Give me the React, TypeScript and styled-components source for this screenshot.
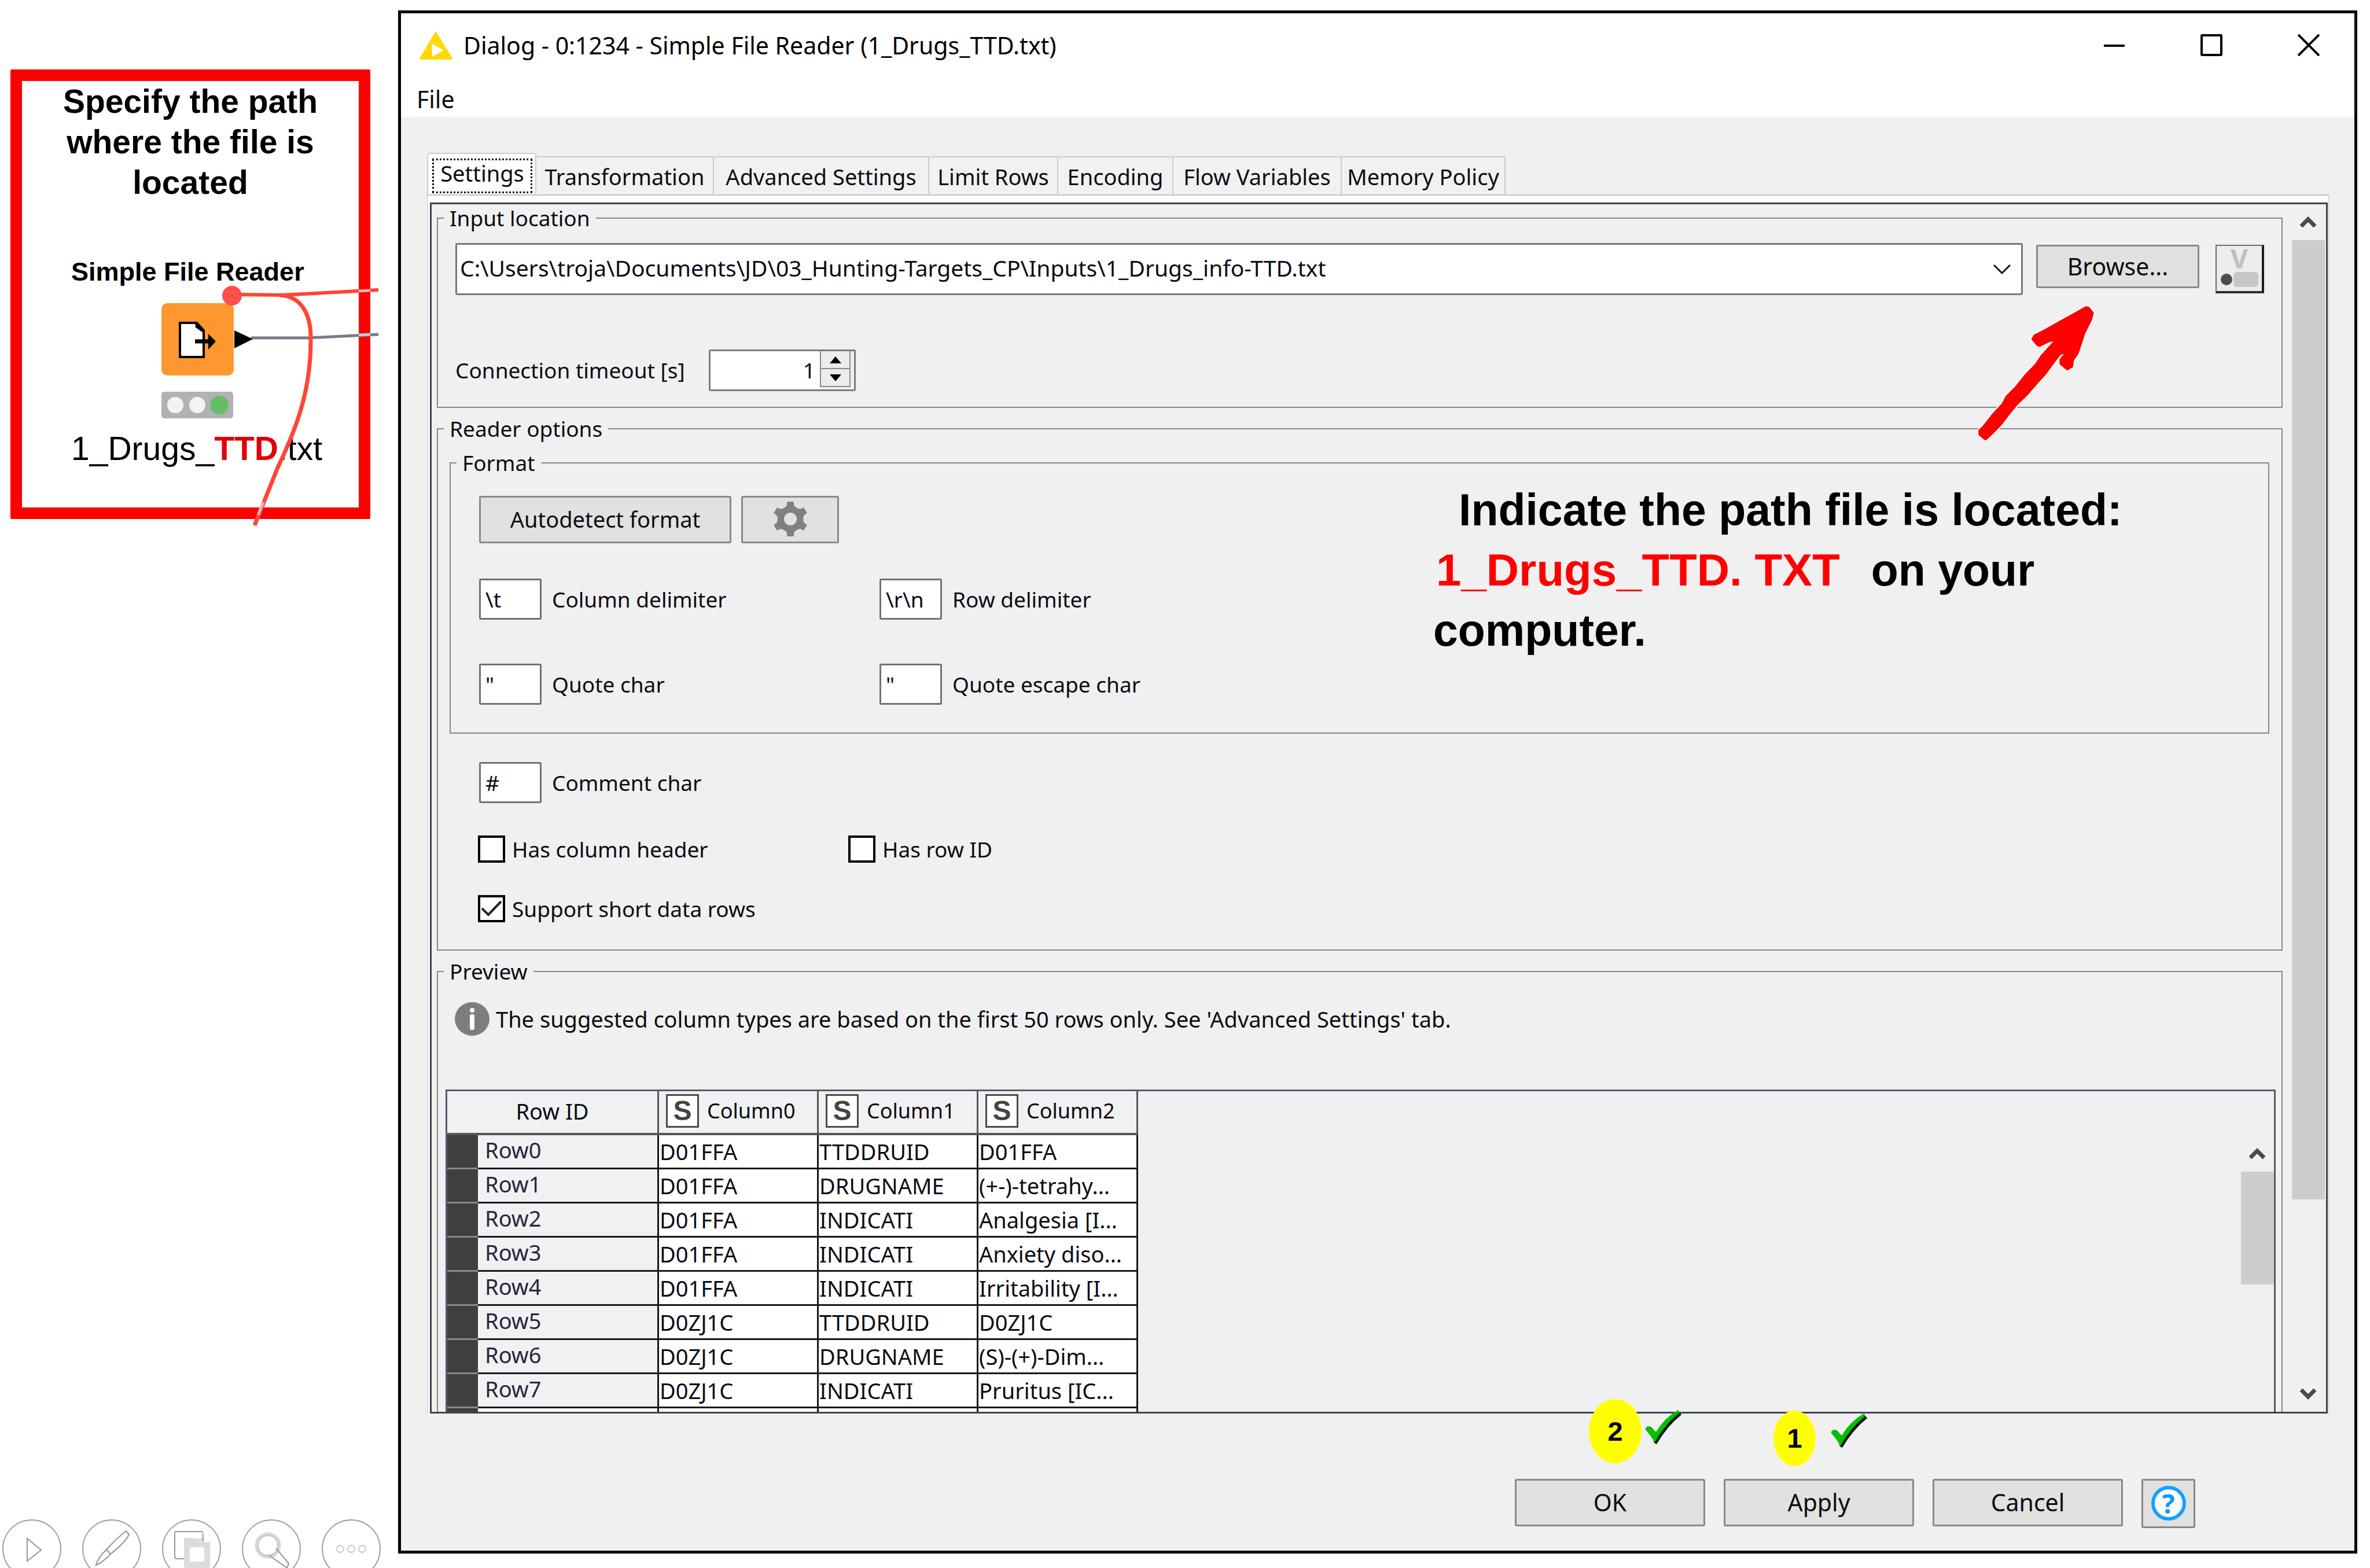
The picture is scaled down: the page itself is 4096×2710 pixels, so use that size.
import React from "react";
import styled, { createGlobalStyle, css } from "styled-components";

const UI = `"Noto Sans", "Open Sans", "DejaVu Sans", sans-serif`;
const ARIAL = `"Liberation Sans", Arial, sans-serif`;

const GlobalStyle = createGlobalStyle`
  *, *::before, *::after { box-sizing: border-box; }
  html, body { margin: 0; background: #fff; }
  body { font-family: ${UI}; font-size: 37px; line-height: 44px; color: #0b0b14; overflow: hidden; }
  button, input, select { font: inherit; color: inherit; margin: 0; }
`;

/* ---------- page ---------- */

const Page = styled.div`
  display: flex;
  height: 100vh;
  overflow: hidden;
`;

const Side = styled.aside`
  flex: 0 0 688px;
  min-width: 0;
  display: flex;
  flex-direction: column;
  justify-content: space-between;
  padding-top: 120px;
`;

const NoteBox = styled.section`
  position: relative;
  height: 777px;
  margin: 0 48px 0 18px;
  border: 20px solid #fe0000;
  border-radius: 2px;
  font-family: ${ARIAL};
  color: #000;
`;

const NoteTitle = styled.h2`
  margin: 0 60px;
  text-align: center;
  font-size: 57px;
  line-height: 70px;
`;

const NodeName = styled.p`
  margin: 90px 0 0 85px;
  font-size: 45px;
  font-weight: 700;
  line-height: 60px;
  white-space: nowrap;
`;

const NodeFile = styled.p`
  margin: 240px 0 0 85px;
  font-size: 57px;
  line-height: 70px;
  white-space: nowrap;
  b { color: #e00008; }
`;

const NodeDrawing = styled.svg`
  position: absolute;
  left: 232px;
  top: 350px;
  width: 390px;
  height: 425px;
`;

const SlideTools = styled.div`
  display: flex;
  gap: 36px;
  height: 84px;
  padding-left: 4px;
`;

const SlideTool = styled.button`
  flex: 0 0 102px;
  height: 102px;
  padding: 0;
  border: 2px solid #a59c9c;
  border-radius: 50%;
  background: #fff;
  svg { display: block; width: 98px; height: 98px; }
`;

/* ---------- dialog frame ---------- */

const Dialog = styled.main`
  flex: 1;
  min-width: 0;
  margin: 18px 22px 25px 0;
  border: 5px solid #000;
  display: flex;
  flex-direction: column;
  background: #fff;
`;

const TitleBar = styled.header`
  display: flex;
  align-items: center;
  height: 110px;
  padding: 0 60px 0 32px;
`;

const TitleText = styled.h1`
  flex: 1;
  margin: 0 0 0 19px;
  font-size: 41px;
  font-weight: 400;
  color: #000;
`;

const WindowButtons = styled.div`
  display: flex;
  gap: 130px;
`;

const WindowButton = styled.button`
  width: 38px;
  height: 38px;
  padding: 0;
  border: 0;
  background: none;
  svg { display: block; }
`;

const MenuBar = styled.nav`
  display: flex;
  align-items: center;
  height: 69px;
  padding: 6px 27px 0;
`;

const MenuItem = styled.button`
  padding: 0;
  border: 0;
  background: none;
  font-size: 41px;
`;

const Body = styled.div`
  flex: 1;
  min-height: 0;
  display: flex;
  flex-direction: column;
  padding: 62px 44px 0 45px;
  background: #f0f0f0;
`;

/* ---------- tabs ---------- */

const Tabs = styled.div`
  display: flex;
  align-items: flex-end;
  height: 72px;
`;

const Tab = styled.button<{ $w: number; $active?: boolean }>`
  flex: 0 0 ${(p) => p.$w}px;
  height: 66px;
  padding: 2px 0 0;
  border: solid #cfc9ca;
  border-width: 2px 2px 0 0;
  background: #f1f1f1;
  font-size: 38px;
  white-space: nowrap;
  ${(p) =>
    p.$active &&
    css`
      height: 72px;
      padding: 6px 5px 0 7px;
      border-width: 2px 2px 0;
      border-radius: 6px 6px 0 0;
      background: #fff;
    `}
`;

const FocusRing = styled.span`
  display: block;
  height: 60px;
  border: 3px dotted #000;
  line-height: 44px;
`;

const TabPanel = styled.section`
  flex: 1;
  min-height: 0;
  display: flex;
  padding: 12px 1px 0 4px;
  border: 1px solid #c4bfc1;
  border-top-width: 2px;
  border-bottom: 0;
  background: #fff;
`;

const ScrollPane = styled.div`
  position: relative;
  flex: 1;
  min-width: 0;
  display: flex;
  overflow: hidden;
  border: 3px solid #3a4356;
  background: #f0f0f0;
`;

const PaneContent = styled.form`
  flex: 1;
  min-width: 0;
  display: flex;
  flex-direction: column;
  gap: 14px;
  padding: 2px 13px 0 9px;
`;

const ScrollBar = styled.div<{ $w: number; $lead: number }>`
  flex: 0 0 ${(p) => p.$w}px;
  display: flex;
  flex-direction: column;
  align-items: center;
  padding-top: ${(p) => p.$lead}px;
`;

const ScrollArrow = styled.button`
  width: 57px;
  height: 62px;
  padding: 0;
  border: 0;
  background: none;
  svg { display: block; margin: 0 auto; }
`;

const ScrollThumb = styled.div<{ $h: number }>`
  width: 57px;
  height: ${(p) => p.$h}px;
  margin-bottom: auto;
  border-radius: 3px;
  background: #cdcdcd;
`;

/* ---------- groups and fields ---------- */

const GroupFrame = styled.fieldset<{ $h: number }>`
  flex: none;
  height: ${(p) => p.$h}px;
  min-width: 0;
  margin: 0;
  padding: 0;
  border: 2px solid #8b8588;
`;

const Legend = styled.legend`
  margin-left: 10px;
  padding: 0 10px;
  line-height: 44px;
`;

const GroupBody = styled.div<{ $pad: string }>`
  padding: ${(p) => p.$pad};
`;

const Row = styled.div<{ $top?: number; $gap?: number }>`
  display: flex;
  align-items: center;
  gap: ${(p) => p.$gap ?? 0}px;
  margin-top: ${(p) => p.$top ?? 0}px;
`;

const PathRow = styled.div`
  display: flex;
  align-items: flex-start;
  gap: 23px;
`;

const Combo = styled.div`
  position: relative;
  flex: 1;
  svg { position: absolute; right: 20px; top: 36px; pointer-events: none; }
`;

const ComboSelect = styled.select`
  display: block;
  width: 100%;
  height: 90px;
  padding: 0 80px 4px 5px;
  border: 3px solid #737887;
  border-radius: 3px;
  background: #fff;
  font-size: 39px;
  line-height: 60px;
  appearance: none;
`;

const PathActions = styled.div`
  display: flex;
  align-items: flex-start;
  gap: 28px;
  padding-top: 3px;
`;

const PushButton = styled.button<{ $w: number; $h: number; $size?: number }>`
  display: flex;
  align-items: center;
  justify-content: center;
  width: ${(p) => p.$w}px;
  height: ${(p) => p.$h}px;
  padding: 0 0 2px;
  border: 3px solid #8d8789;
  border-radius: 3px;
  background: #e1e1e0;
  font-size: ${(p) => p.$size ?? 38}px;
  white-space: nowrap;
`;

const VariableButton = styled.button`
  display: flex;
  flex-direction: column;
  align-items: center;
  width: 84px;
  height: 84px;
  padding: 0;
  border: solid #6b6b6b;
  border-width: 2px 4px 4px 2px;
  border-right-color: #1c1c1c;
  border-bottom-color: #2c2c2c;
  background: #ececeb;
  font-size: 46px;
  font-weight: 700;
  line-height: 42px;
  color: #bfbfbf;
`;

const Switch = styled.span`
  display: flex;
  align-items: center;
  gap: 2px;
  height: 28px;
  margin-top: 2px;
  &::before { content: ""; width: 20px; height: 20px; border-radius: 50%; background: #4b4f55; }
  &::after { content: ""; width: 43px; height: 26px; border-radius: 6px; background: #c6c6c6; }
`;

const TimeoutLabel = styled.label`
  flex: 0 0 438px;
`;

const Spinner = styled.div`
  display: flex;
  width: 254px;
  height: 72px;
  padding-right: 6px;
  border: 3px solid #7b7c84;
  border-radius: 3px;
  background: #f0f0f0;
`;

const SpinnerInput = styled.input`
  flex: 1;
  min-width: 0;
  padding: 0 8px 0 0;
  border: 0;
  background: #fff;
  text-align: right;
  appearance: textfield;
  &::-webkit-inner-spin-button { appearance: none; }
`;

const SpinnerButtons = styled.div`
  display: flex;
  flex-direction: column;
  width: 53px;
  height: 62px;
`;

const SpinnerButton = styled.button`
  flex: 1;
  display: flex;
  align-items: center;
  justify-content: center;
  padding: 0;
  border: 2px solid #8a8a8e;
  border-top-width: 0;
  background: #ededed;
`;

const FieldGrid = styled.div`
  display: grid;
  grid-template-columns: 692px 1fr;
  row-gap: 76px;
  margin-top: 61px;
`;

const Field = styled.div<{ $top?: number; $left?: number }>`
  display: flex;
  align-items: center;
  gap: 18px;
  margin: ${(p) => p.$top ?? 0}px 0 0 ${(p) => p.$left ?? 0}px;
`;

const CharInput = styled.input`
  width: 108px;
  height: 71px;
  padding: 0 8px;
  border: 3px solid #6f7080;
  border-radius: 3px;
  background: #fff;
  line-height: 60px;
`;

const CheckRow = styled.div<{ $top: number }>`
  display: grid;
  grid-template-columns: 640px 1fr;
  margin: ${(p) => p.$top}px 0 0 49px;
`;

const CheckLabel = styled.label`
  position: relative;
  display: flex;
  align-items: center;
  gap: 12px;
  svg { position: absolute; left: 5px; top: 6px; pointer-events: none; }
`;

const CheckBox = styled.input`
  appearance: none;
  width: 47px;
  height: 47px;
  border: 4px solid #000;
  background: #fff;
`;

/* ---------- preview ---------- */

const Info = styled.p`
  display: flex;
  align-items: center;
  gap: 11px;
  margin: 0 0 93px 16px;
  font-size: 38px;
`;

const TableBox = styled.div`
  display: flex;
  justify-content: space-between;
  height: 600px;
  border: 3px solid #555c70;
`;

const DataTable = styled.table`
  width: 1194px;
  table-layout: fixed;
  border-spacing: 0;
  align-self: flex-start;
  font-size: 38px;
`;

const HeadCell = styled.th`
  height: 76px;
  padding: 0 0 4px;
  border-right: 3px solid #55555c;
  border-bottom: 4px solid #55555c;
  background: #f1f1f2;
  font-weight: 400;
`;

const HeadInner = styled.span`
  display: flex;
  align-items: center;
  gap: 14px;
  padding-left: 12px;
  font-size: 36px;
`;

const TypeIcon = styled.span`
  width: 57px;
  height: 58px;
  border: 3px solid #4a4a4e;
  background: #fff;
  font-family: ${ARIAL};
  font-size: 48px;
  font-weight: 700;
  line-height: 52px;
  text-align: center;
  color: #444;
`;

const Strip = styled.td`
  height: 59px;
  padding: 0;
  border-bottom: 3px solid #8a8a8a;
  background: #3f3f3f;
`;

const RowHead = styled.th<{ $blank: boolean }>`
  height: 59px;
  padding: 0 0 6px 12px;
  border-right: 3px solid #16161c;
  border-bottom: 3px solid #16161c;
  background: ${(p) => (p.$blank ? "#fff" : "#f1f1f4")};
  font-weight: 400;
  line-height: 44px;
  text-align: left;
  color: #26263a;
`;

const Cell = styled.td`
  height: 59px;
  padding: 0 0 0 1px;
  border-right: 3px solid #16161c;
  border-bottom: 3px solid #16161c;
  background: #fff;
  line-height: 50px;
  white-space: nowrap;
  overflow: hidden;
`;

/* ---------- annotations over the pane ---------- */

const Callout = styled.div`
  position: absolute;
  left: 1731px;
  top: 476px;
  font-family: ${ARIAL};
  font-size: 77px;
  font-weight: 700;
  line-height: 104px;
  white-space: nowrap;
  color: #000;
`;

const CalloutLine = styled.p<{ $indent?: number }>`
  display: flex;
  gap: 54px;
  margin: 0;
  padding-left: ${(p) => p.$indent ?? 0}px;
  em { font-size: 78px; font-style: normal; color: #fe0000; }
`;

const PointerArrow = styled.svg`
  position: absolute;
  right: 395px;
  top: 171px;
  width: 210px;
  height: 244px;
`;

/* ---------- footer ---------- */

const Footer = styled.footer`
  display: flex;
  justify-content: flex-end;
  align-items: flex-start;
  gap: 32px;
  height: 237px;
  padding: 113px 231px 0 0;
`;

const Slot = styled.div`
  position: relative;
`;

const Step = styled.span<{ $x: number; $y: number; $w: number; $h: number }>`
  position: absolute;
  left: ${(p) => p.$x}px;
  top: ${(p) => p.$y}px;
  width: ${(p) => p.$w}px;
  height: ${(p) => p.$h}px;
  border-radius: 50%;
  background: #ffff00;
  font-family: ${ARIAL};
  font-size: 47px;
  font-weight: 700;
  line-height: ${(p) => p.$h}px;
  text-align: center;
  color: #000;
`;

const StepTick = styled.svg<{ $x: number; $y: number }>`
  position: absolute;
  left: ${(p) => p.$x}px;
  top: ${(p) => p.$y}px;
  width: 64px;
  height: 60px;
`;

const HelpMark = styled.span`
  width: 60px;
  height: 60px;
  border: 6px solid #189fff;
  border-radius: 50%;
  background: #fff;
  font-size: 46px;
  font-weight: 700;
  line-height: 48px;
  text-align: center;
  color: #0a9bff;
`;

/* ---------- drawings ---------- */

const Chevron = ({ up }: { up?: boolean }) => (
  <svg width="30" height="24" viewBox="0 0 30 24" aria-hidden="true">
    <path d={up ? "M3 19 L15 7 L27 19" : "M3 5 L15 17 L27 5"} fill="none" stroke="#4a4b50" strokeWidth="7" />
  </svg>
);

const gearPoints = () => {
  const pts: string[] = [];
  const at = (deg: number, r: number) => {
    const a = (deg * Math.PI) / 180;
    pts.push(`${(32 + r * Math.sin(a)).toFixed(1)},${(32 - r * Math.cos(a)).toFixed(1)}`);
  };
  for (let i = 0; i < 6; i++) {
    const c = i * 60;
    at(c - 22, 22);
    at(c - 14, 24);
    at(c - 10, 30);
    at(c + 10, 30);
    at(c + 14, 24);
    at(c + 22, 22);
  }
  return pts.join(" ");
};

const Gear = () => (
  <svg width="64" height="64" viewBox="0 0 64 64" aria-hidden="true">
    <polygon points={gearPoints()} fill="#7f8082" stroke="#7f8082" strokeWidth="1" strokeLinejoin="round" />
    <circle cx="32" cy="32" r="11" fill="#e1e1e0" />
  </svg>
);

const Tick = ({ x, y }: { x: number; y: number }) => (
  <StepTick $x={x} $y={y} viewBox="0 0 64 60" aria-hidden="true">
    <path d="M4 31 Q8 26 12 31 L20 40 Q35 15 58 2 L63 8 Q38 28 20 59 L16 57 Q12 40 4 36 Z" fill="#001505" />
    <path d="M1 31 Q6 25 11 31 L19 38 Q33 14 57 0 L60 4 Q33 26 17 56 Q10 44 1 34 Z" fill="#00c000" />
  </StepTick>
);

const Node = () => (
  <NodeDrawing viewBox="270 490 390 425" aria-hidden="true">
    <path d="M434 584 L533 584 L654 578" fill="none" stroke="#7c7a84" strokeWidth="5" />
    <path d="M620 579 L640 578" stroke="#a9d4ee" strokeWidth="5" />
    <path d="M410 509 L488 510 L654 501" fill="none" stroke="#ff4433" strokeWidth="6" />
    <path d="M620 503 L640 502" stroke="#ffc4bd" strokeWidth="4" />
    <path d="M484 510 C522 512 537 545 537 583 C538 670 515 735 480 808 L440 908" fill="none" stroke="#ff4536" strokeWidth="7" />
    <path d="M455 868 L446 890" stroke="#ffb3ad" strokeWidth="5" />
    <rect x="279" y="524" width="125" height="125" rx="10" fill="#fe972f" />
    <ellipse cx="401" cy="511" rx="17" ry="17" fill="#fd4f4c" />
    <path d="M405 571 V602 L437 586 Z" fill="#000" />
    <path d="M311 558 H340 L352 571 V617 H311 Z" fill="#fff" stroke="#000" strokeWidth="4" />
    <path d="M337 556 L354 571 V577 L338 566 Z" fill="#000" />
    <path d="M337 590 H362" stroke="#000" strokeWidth="7" />
    <path d="M360 577 L373 590 L360 604 Z" fill="#000" />
    <rect x="279" y="677" width="124" height="46" rx="5" fill="#b2b1b5" />
    <circle cx="303" cy="700" r="14" fill="#f3f3f3" />
    <circle cx="341" cy="700" r="14" fill="#f3f3f3" />
    <circle cx="379" cy="700" r="16" fill="#65bd61" />
  </NodeDrawing>
);

const slideTools = [
  { name: "Play", art: <path d="M41 31 V70 L65 51 Z" /> },
  {
    name: "Pen",
    art: <path d="M74 18 L79 24 Q74 36 47 58 Q34 72 22 77 Q24 66 40 50 Q58 30 74 18 Z M40 50 L47 58" />,
  },
  {
    name: "Slides",
    art: (
      <>
        <path d="M36 30 H69 V37 H81 V82 H36 Z" fill="#dcdcde" stroke="none" />
        <path d="M67 19 H22 Q20 19 20 22 V62 Q20 66 24 66 H36" />
        <path d="M67 19 Q69 19 69 36" />
        <rect x="46" y="46" width="25" height="25" rx="3" fill="#fff" stroke="none" />
        <path d="M49 24 H66 V30 Q58 34 49 28 Z" fill="#fff" stroke="none" />
      </>
    ),
  },
  {
    name: "Zoom",
    art: (
      <>
        <circle cx="43" cy="43" r="20" stroke="#dad6d6" strokeWidth="5" />
        <circle cx="43" cy="43" r="17" strokeWidth="1" />
        <path d="M45 60 L76 82 M57 48 L79 74 L76 82" />
      </>
    ),
  },
  {
    name: "More",
    art: (
      <g stroke="#cfc9c9">
        <circle cx="30" cy="49" r="6" />
        <circle cx="49" cy="49" r="6" />
        <circle cx="68" cy="49" r="6" />
      </g>
    ),
  },
];

/* ---------- data ---------- */

const tabs: [string, number][] = [
  ["Settings", 189],
  ["Transformation", 307],
  ["Advanced Settings", 372],
  ["Limit Rows", 223],
  ["Encoding", 199],
  ["Flow Variables", 291],
  ["Memory Policy", 283],
];

const rows = [
  ["Row0", "D01FFA", "TTDDRUID", "D01FFA"],
  ["Row1", "D01FFA", "DRUGNAME", "(+-)-tetrahy..."],
  ["Row2", "D01FFA", "INDICATI", "Analgesia [I..."],
  ["Row3", "D01FFA", "INDICATI", "Anxiety diso..."],
  ["Row4", "D01FFA", "INDICATI", "Irritability [I..."],
  ["Row5", "D0ZJ1C", "TTDDRUID", "D0ZJ1C"],
  ["Row6", "D0ZJ1C", "DRUGNAME", "(S)-(+)-Dim..."],
  ["Row7", "D0ZJ1C", "INDICATI", "Pruritus [IC..."],
  ["", "", "", ""],
];

type GroupProps = { title: string; height: number; pad: string; children: React.ReactNode };

const Group = ({ title, height, pad, children }: GroupProps) => (
  <GroupFrame $h={height}>
    <Legend>{title}</Legend>
    <GroupBody $pad={pad}>{children}</GroupBody>
  </GroupFrame>
);

const CharField = ({ id, label, value }: { id: string; label: string; value: string }) => (
  <Field>
    <CharInput id={id} defaultValue={value} />
    <label htmlFor={id}>{label}</label>
  </Field>
);

const path = "C:\\Users\\troja\\Documents\\JD\\03_Hunting-Targets_CP\\Inputs\\1_Drugs_info-TTD.txt";

export default function App() {
  return (
    <Page>
      <GlobalStyle />
      <Side>
        <NoteBox>
          <NoteTitle>Specify the path where the file is located</NoteTitle>
          <NodeName>Simple File Reader</NodeName>
          <NodeFile>
            1_Drugs_<b>TTD</b>.txt
          </NodeFile>
          <Node />
        </NoteBox>
        <SlideTools>
          {slideTools.map((t) => (
            <SlideTool key={t.name} type="button" aria-label={t.name}>
              <svg viewBox="0 0 98 98" fill="none" stroke="#9a9696" strokeWidth="2">
                {t.art}
              </svg>
            </SlideTool>
          ))}
        </SlideTools>
      </Side>

      <Dialog>
        <TitleBar>
          <svg width="57" height="49" viewBox="0 0 57 49" aria-hidden="true">
            <path d="M28 0 L57 47 Q57 49 55 49 H2 Q0 49 0 47 Z" fill="#ffd800" />
            <path d="M21 21 L42 33 L22 44 Z" fill="#fff" />
          </svg>
          <TitleText>Dialog - 0:1234 - Simple File Reader (1_Drugs_TTD.txt)</TitleText>
          <WindowButtons>
            <WindowButton type="button" aria-label="Minimize">
              <svg width="38" height="38" viewBox="0 0 38 38">
                <path d="M1 20 H37" stroke="#000" strokeWidth="4" />
              </svg>
            </WindowButton>
            <WindowButton type="button" aria-label="Maximize">
              <svg width="38" height="38" viewBox="0 0 38 38">
                <rect x="2" y="2" width="34" height="34" rx="1" fill="none" stroke="#000" strokeWidth="4" />
              </svg>
            </WindowButton>
            <WindowButton type="button" aria-label="Close">
              <svg width="38" height="38" viewBox="0 0 38 38">
                <path d="M1 1 L37 37 M37 1 L1 37" stroke="#000" strokeWidth="4" />
              </svg>
            </WindowButton>
          </WindowButtons>
        </TitleBar>
        <MenuBar>
          <MenuItem type="button">File</MenuItem>
        </MenuBar>

        <Body>
          <Tabs role="tablist">
            {tabs.map(([name, w], i) => (
              <Tab key={name} type="button" role="tab" aria-selected={i === 0} $w={w} $active={i === 0}>
                {i === 0 ? <FocusRing>{name}</FocusRing> : name}
              </Tab>
            ))}
          </Tabs>

          <TabPanel role="tabpanel">
            <ScrollPane>
              <PaneContent>
                <Group title="Input location" height={350} pad="21px 30px 0 30px">
                  <PathRow>
                    <Combo>
                      <ComboSelect aria-label="Input location" defaultValue={path}>
                        <option>{path}</option>
                      </ComboSelect>
                      <svg width="32" height="20" viewBox="0 0 32 20" aria-hidden="true">
                        <path d="M2 2 L16 16 L30 2" fill="none" stroke="#111" strokeWidth="3" />
                      </svg>
                    </Combo>
                    <PathActions>
                      <PushButton type="button" $w={282} $h={75} $size={41}>
                        Browse...
                      </PushButton>
                      <VariableButton type="button" aria-label="Flow variable">
                        V
                        <Switch />
                      </VariableButton>
                    </PathActions>
                  </PathRow>
                  <Row $top={94}>
                    <TimeoutLabel htmlFor="timeout">Connection timeout [s]</TimeoutLabel>
                    <Spinner>
                      <SpinnerInput id="timeout" type="number" defaultValue={1} />
                      <SpinnerButtons>
                        <SpinnerButton type="button" aria-label="Increase">
                          <svg width="20" height="12" viewBox="0 0 20 12">
                            <path d="M0 12 L10 0 L20 12 Z" fill="#000" />
                          </svg>
                        </SpinnerButton>
                        <SpinnerButton type="button" aria-label="Decrease">
                          <svg width="20" height="12" viewBox="0 0 20 12">
                            <path d="M0 0 L10 12 L20 0 Z" fill="#000" />
                          </svg>
                        </SpinnerButton>
                      </SpinnerButtons>
                    </Spinner>
                  </Row>
                </Group>

                <Group title="Reader options" height={924} pad="15px 21px 0 20px">
                  <Group title="Format" height={490} pad="35px 48px 0 49px">
                    <Row $gap={17}>
                      <PushButton type="button" $w={436} $h={82}>
                        Autodetect format
                      </PushButton>
                      <PushButton type="button" aria-label="Autodetect settings" $w={169} $h={82}>
                        <Gear />
                      </PushButton>
                    </Row>
                    <FieldGrid>
                      <CharField id="col" label="Column delimiter" value="\t" />
                      <CharField id="row" label="Row delimiter" value="\r\n" />
                      <CharField id="quote" label="Quote char" value={'"'} />
                      <CharField id="escape" label="Quote escape char" value={'"'} />
                    </FieldGrid>
                  </Group>
                  <Field $top={49} $left={51}>
                    <CharInput id="comment" defaultValue="#" />
                    <label htmlFor="comment">Comment char</label>
                  </Field>
                  <CheckRow $top={56}>
                    <CheckLabel>
                      <CheckBox type="checkbox" />
                      Has column header
                    </CheckLabel>
                    <CheckLabel>
                      <CheckBox type="checkbox" />
                      Has row ID
                    </CheckLabel>
                  </CheckRow>
                  <CheckRow $top={56}>
                    <CheckLabel>
                      <CheckBox type="checkbox" defaultChecked />
                      <svg width="38" height="34" viewBox="0 0 38 34" aria-hidden="true">
                        <path d="M2 17 L13 28 L35 5" fill="none" stroke="#222" strokeWidth="4" />
                      </svg>
                      Support short data rows
                    </CheckLabel>
                  </CheckRow>
                </Group>

                <Group title="Preview" height={840} pad="31px 10px 0 13px">
                  <Info>
                    <svg width="60" height="58" viewBox="0 0 60 58" aria-hidden="true">
                      <ellipse cx="30" cy="29" rx="30" ry="29" fill="#7d7d7f" />
                      <circle cx="30" cy="14" r="4" fill="#fff" />
                      <rect x="26" y="21" width="8" height="27" rx="3" fill="#fff" />
                    </svg>
                    The suggested column types are based on the first 50 rows only. See 'Advanced Settings' tab.
                  </Info>
                  <TableBox>
                    <DataTable>
                      <colgroup>
                        <col width="53" />
                        <col width="313" />
                        <col width="276" />
                        <col width="276" />
                        <col width="276" />
                      </colgroup>
                      <thead>
                        <tr>
                          <HeadCell colSpan={2}>Row ID</HeadCell>
                          {["Column0", "Column1", "Column2"].map((c) => (
                            <HeadCell key={c}>
                              <HeadInner>
                                <TypeIcon>S</TypeIcon>
                                {c}
                              </HeadInner>
                            </HeadCell>
                          ))}
                        </tr>
                      </thead>
                      <tbody>
                        {rows.map((r, i) => (
                          <tr key={i}>
                            <Strip />
                            <RowHead scope="row" $blank={!r[0]}>
                              {r[0]}
                            </RowHead>
                            <Cell>{r[1]}</Cell>
                            <Cell>{r[2]}</Cell>
                            <Cell>{r[3]}</Cell>
                          </tr>
                        ))}
                      </tbody>
                    </DataTable>
                    <ScrollBar $w={58} $lead={77}>
                      <ScrollArrow type="button" aria-label="Scroll table up">
                        <Chevron up />
                      </ScrollArrow>
                      <ScrollThumb $h={195} />
                    </ScrollBar>
                  </TableBox>
                </Group>
              </PaneContent>

              <ScrollBar $w={62} $lead={0}>
                <ScrollArrow type="button" aria-label="Scroll up">
                  <Chevron up />
                </ScrollArrow>
                <ScrollThumb $h={1658} />
                <ScrollArrow type="button" aria-label="Scroll down">
                  <Chevron />
                </ScrollArrow>
              </ScrollBar>

              <PointerArrow viewBox="270 1050 400 490" preserveAspectRatio="none" aria-hidden="true">
                <path
                  d="M632 1060 L643 1063 L658 1083 L652 1108 L630 1155 L608 1225 L592 1250 L590 1272 L570 1284 L545 1262 L545 1245 L560 1225 L548 1230 L500 1298 L470 1333 L440 1370 L408 1402 L380 1438 L353 1475 L330 1500 L305 1525 L298 1525 L278 1508 L278 1490 L290 1478 L325 1432 L355 1398 L368 1372 L398 1340 L430 1298 L465 1260 L482 1232 L505 1205 L525 1182 L510 1186 L480 1202 L470 1198 L452 1175 L460 1160 L500 1138 L550 1108 L590 1085 Z"
                  fill="#fe0000"
                  stroke="#fff"
                  strokeWidth="8"
                  strokeLinejoin="round"
                  paintOrder="stroke"
                />
              </PointerArrow>
              <Callout>
                <CalloutLine $indent={44}>Indicate the path file is located:</CalloutLine>
                <CalloutLine $indent={5}>
                  <em>1_Drugs_TTD. TXT</em>
                  <span>on your</span>
                </CalloutLine>
                <CalloutLine>computer.</CalloutLine>
              </Callout>
            </ScrollPane>
          </TabPanel>

          <Footer>
            <Slot>
              <PushButton type="button" $w={329} $h={82} $size={41}>
                OK
              </PushButton>
              <Step $x={128} $y={-138} $w={91} $h={111}>
                2
              </Step>
              <Tick x={225} y={-119} />
            </Slot>
            <Slot>
              <PushButton type="button" $w={329} $h={82} $size={41}>
                Apply
              </PushButton>
              <Step $x={86} $y={-118} $w={73} $h={96}>
                1
              </Step>
              <Tick x={185} y={-113} />
            </Slot>
            <PushButton type="button" $w={329} $h={82} $size={41}>
              Cancel
            </PushButton>
            <PushButton type="button" aria-label="Help" $w={93} $h={85}>
              <HelpMark>?</HelpMark>
            </PushButton>
          </Footer>
        </Body>
      </Dialog>
    </Page>
  );
}
